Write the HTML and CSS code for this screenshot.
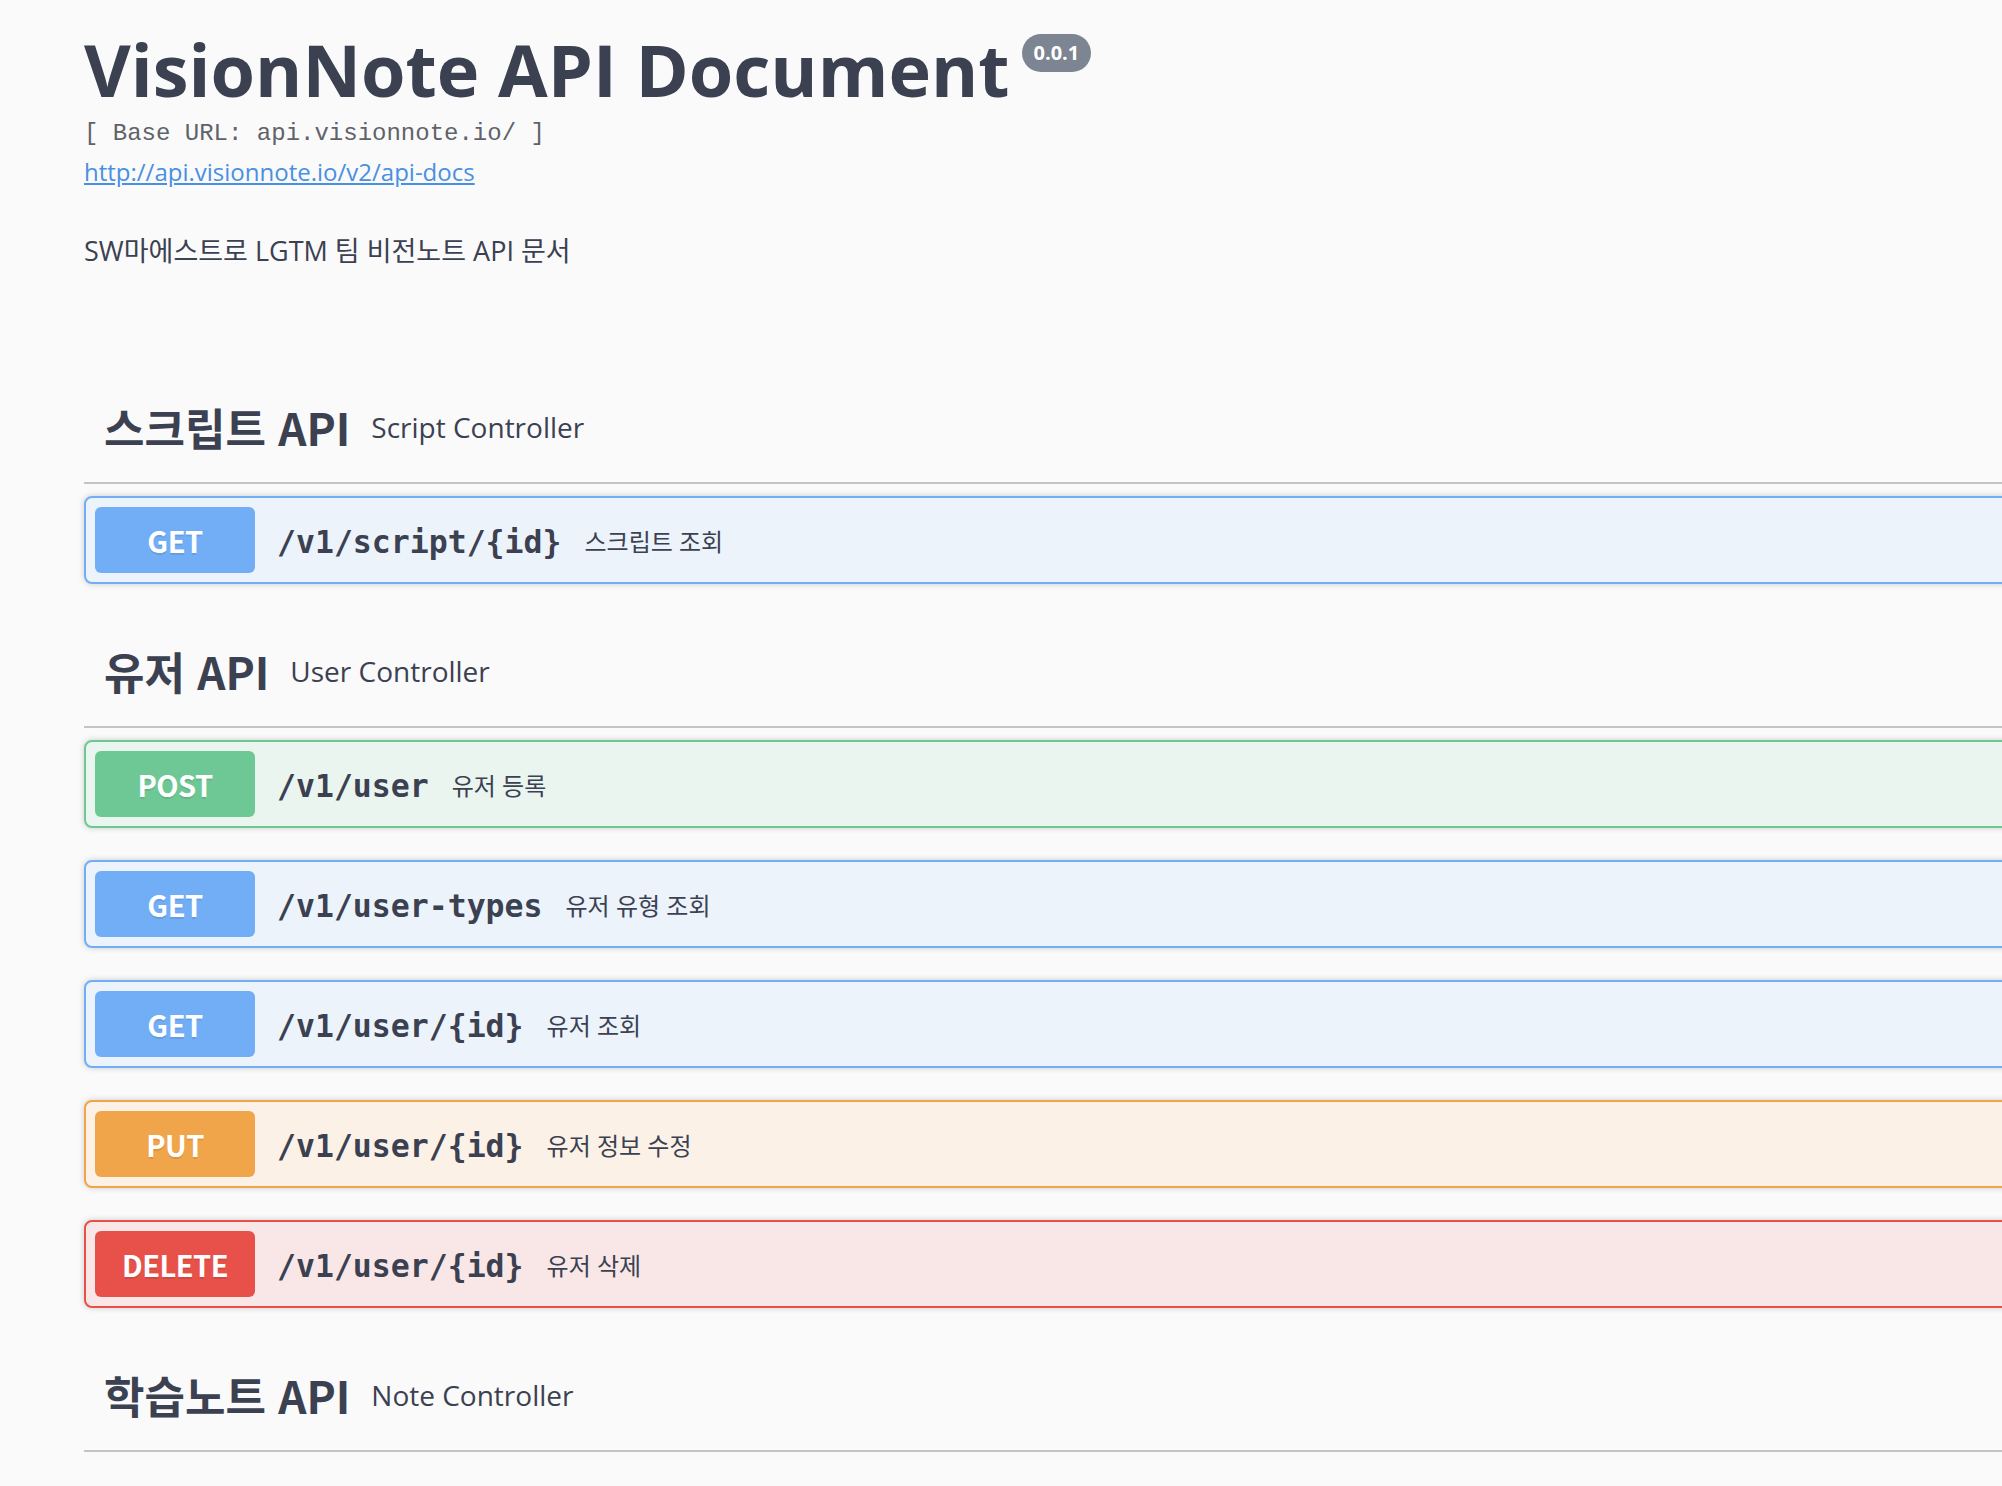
FILE: index.html
```html
<!DOCTYPE html>
<html lang="ko">
<head>
<meta charset="utf-8">
<title>VisionNote API Document</title>
<link rel="stylesheet" href="styles.css">
</head>
<body>
<div class="page">
  <div class="wrapper">
    <div class="info">
      <h2 class="title">VisionNote API Document<span class="version">0.0.1</span></h2>
      <p class="base-url">[ Base URL: api.visionnote.io/ ]</p>
      <a class="docs-link" href="#">http://api.visionnote.io/v2/api-docs</a>
      <p class="desc">SW마에스트로 LGTM 팀 비전노트 API 문서</p>
    </div>

    <section class="tag-section">
      <h3 class="tag"><span class="tag-name">스크립트 API</span><small class="tag-desc">Script Controller</small></h3>
      <div class="ops">
        <div class="op op-get"><span class="method">GET</span><span class="path">/v1/script/{id}</span><span class="op-desc">스크립트 조회</span></div>
      </div>
    </section>

    <section class="tag-section">
      <h3 class="tag"><span class="tag-name">유저 API</span><small class="tag-desc">User Controller</small></h3>
      <div class="ops">
        <div class="op op-post"><span class="method">POST</span><span class="path">/v1/user</span><span class="op-desc">유저 등록</span></div>
        <div class="op op-get"><span class="method">GET</span><span class="path">/v1/user-types</span><span class="op-desc">유저 유형 조회</span></div>
        <div class="op op-get"><span class="method">GET</span><span class="path">/v1/user/{id}</span><span class="op-desc">유저 조회</span></div>
        <div class="op op-put"><span class="method">PUT</span><span class="path">/v1/user/{id}</span><span class="op-desc">유저 정보 수정</span></div>
        <div class="op op-delete"><span class="method">DELETE</span><span class="path">/v1/user/{id}</span><span class="op-desc">유저 삭제</span></div>
      </div>
    </section>

    <section class="tag-section">
      <h3 class="tag"><span class="tag-name">학습노트 API</span><small class="tag-desc">Note Controller</small></h3>
    </section>
  </div>
</div>
</body>
</html>
```

FILE: styles.css
```css
html, body {
  margin: 0;
  padding: 0;
  background: #fafafa;
}

body {
  color: #3b4151;
  font-family: "Open Sans", "Noto Sans CJK KR", sans-serif;
}

.page {
  height: 1486px;
  overflow: hidden;
}

.wrapper {
  width: 2920px;
  padding-left: 84px;
  box-sizing: border-box;
}

/* ---------- info ---------- */
.info {
  padding-top: 19px;
}

.title {
  margin: 0;
  font-family: "Open Sans", "Noto Sans CJK KR", sans-serif;
  font-size: 72px;
  font-weight: 700;
  line-height: 100px;
  color: #3b4151;
  white-space: nowrap;
}

.version {
  display: inline-block;
  vertical-align: top;
  margin: 15px 0 0 12px;
  padding: 4px 12px;
  border-radius: 114px;
  background: #7d8492;
  color: #fff;
  font-family: "Open Sans", sans-serif;
  font-size: 20px;
  font-weight: 700;
  line-height: 30px;
}

.base-url {
  margin: 0;
  padding-top: 1px;
  font-family: "Liberation Mono", "DejaVu Sans Mono", monospace;
  font-size: 24px;
  font-weight: 300;
  line-height: 28px;
  color: #5f626a;
}

.docs-link {
  display: block;
  width: max-content;
  margin-top: 8px;
  font-family: "Open Sans", sans-serif;
  font-size: 24px;
  line-height: 32px;
  color: #4990e2;
  text-decoration: underline;
}

.desc {
  margin: 43px 0 0;
  font-family: "Open Sans", "Noto Sans CJK KR", sans-serif;
  font-size: 27px;
  line-height: 40px;
  color: #3b4151;
}

/* ---------- tag sections ---------- */
.info + .tag-section {
  margin-top: 101px;
}

.tag {
  display: flex;
  align-items: center;
  margin: 0;
  padding: 21px 20px;
  border-bottom: 2px solid #c3c4c8;
  height: 68px;
}

.tag-name {
  font-family: "Noto Sans CJK KR", sans-serif;
  font-size: 44px;
  font-weight: 700;
  line-height: 68px;
  color: #3b4151;
}

.tag-desc {
  margin-left: 21px;
  font-family: "Open Sans", "Noto Sans CJK KR", sans-serif;
  font-size: 28px;
  font-weight: 400;
  line-height: 40px;
  color: #3b4151;
}

.ops {
  padding-top: 12px;
}

.op {
  display: flex;
  align-items: center;
  height: 66px;
  padding: 9px;
  margin-bottom: 32px;
  border: 2px solid;
  border-radius: 8px;
  box-shadow: 0 0 6px rgba(0, 0, 0, 0.19);
}

.method {
  width: 160px;
  height: 66px;
  border-radius: 6px;
  font-family: "Noto Sans CJK KR", sans-serif;
  font-size: 29px;
  font-weight: 700;
  letter-spacing: -0.5px;
  line-height: 66px;
  text-align: center;
  color: #fff;
  text-shadow: 0 2px 0 rgba(0, 0, 0, 0.1);
}

.path {
  margin-left: 22px;
  margin-top: 4px;
  font-family: "DejaVu Sans Mono", "Liberation Mono", monospace;
  font-size: 31.5px;
  font-weight: 700;
  color: #3b4151;
}

.op-desc {
  margin-left: 23px;
  font-family: "Open Sans", "Noto Sans CJK KR", sans-serif;
  font-size: 24px;
  color: #3b4151;
}

.op-get {
  background: #ecf3fb;
  border-color: #72aef6;
}
.op-get .method {
  background: #72aef6;
}

.op-post {
  background: #ebf5ef;
  border-color: #6ec895;
}
.op-post .method {
  background: #6ec895;
}

.op-put {
  background: #fbf1e7;
  border-color: #f0a54b;
}
.op-put .method {
  background: #f0a54b;
}

.op-delete {
  background: #f9e7e7;
  border-color: #e8514a;
}
.op-delete .method {
  background: #e8514a;
}
```
